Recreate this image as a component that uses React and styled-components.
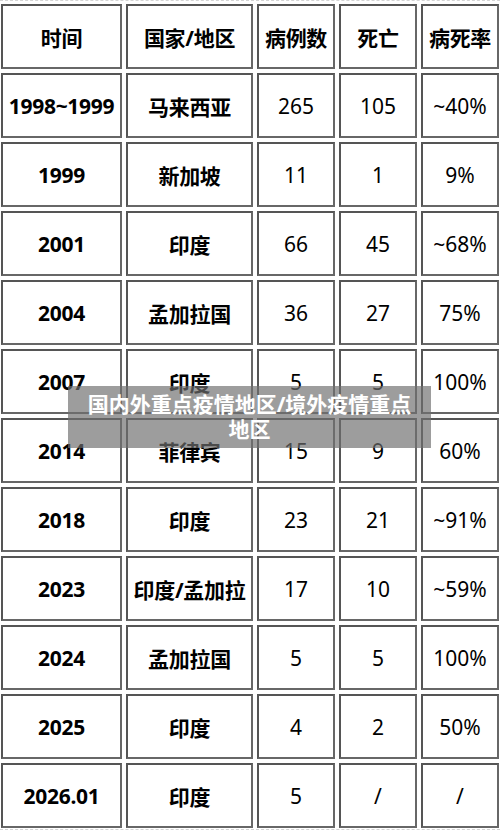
import styled, { createGlobalStyle } from "styled-components";

const GlobalStyle = createGlobalStyle`
  html, body {
    margin: 0;
    padding: 0;
    background: #ffffff;
  }
  body {
    font-family: "Noto Sans", "Noto Sans CJK SC", sans-serif;
    color: #000;
  }
`;

const headers = ["时间", "国家/地区", "病例数", "死亡", "病死率"];

const rows = [
  ["1998~1999", "马来西亚", "265", "105", "~40%"],
  ["1999", "新加坡", "11", "1", "9%"],
  ["2001", "印度", "66", "45", "~68%"],
  ["2004", "孟加拉国", "36", "27", "75%"],
  ["2007", "印度", "5", "5", "100%"],
  ["2014", "菲律宾", "15", "9", "60%"],
  ["2018", "印度", "23", "21", "~91%"],
  ["2023", "印度/孟加拉", "17", "10", "~59%"],
  ["2024", "孟加拉国", "5", "5", "100%"],
  ["2025", "印度", "4", "2", "50%"],
  ["2026.01", "印度", "5", "/", "/"],
];

function App() {
  return (
    <>
      <GlobalStyle />
      <Page>
        <Grid>
          {headers.map((h) => (
            <Cell key={h} $bold>
              {h}
            </Cell>
          ))}
          {rows.map((row) =>
            row.map((value, i) => (
              <Cell key={row[0] + i} $bold={i < 2}>
                {value}
              </Cell>
            ))
          )}
        </Grid>
        <Caption>
          国内外重点疫情地区/境外疫情重点
          <br />
          地区
        </Caption>
      </Page>
    </>
  );
}

const Page = styled.div`
  position: relative;
  width: 500px;
  box-sizing: border-box;
  border-top: 1px dashed #d4d4d4;
  border-bottom: 1px dashed #d4d4d4;
  padding: 3px 0 1px 1px;
`;

const Grid = styled.div`
  display: grid;
  grid-template-columns: 121px 127px 78px 78px 78px;
  grid-auto-rows: 65px;
  column-gap: 4px;
  row-gap: 4px;
`;

const Cell = styled.div`
  display: flex;
  align-items: center;
  justify-content: center;
  box-sizing: border-box;
  border: 2px solid #676767;
  border-top-color: #555;
  border-left-color: #555;
  font-size: 21px;
  font-weight: ${(props) => (props.$bold ? 700 : 400)};
  color: #000;
  white-space: nowrap;
  letter-spacing: ${(props) => (props.$bold ? "-0.3px" : "0")};
`;

const Caption = styled.div`
  position: absolute;
  top: 385px;
  left: 68px;
  width: 363px;
  box-sizing: border-box;
  padding: 6px 8px;
  background: rgba(110, 110, 110, 0.68);
  color: #ffffff;
  font-size: 21px;
  font-weight: 700;
  line-height: 25px;
  text-align: center;
`;

export default App;
